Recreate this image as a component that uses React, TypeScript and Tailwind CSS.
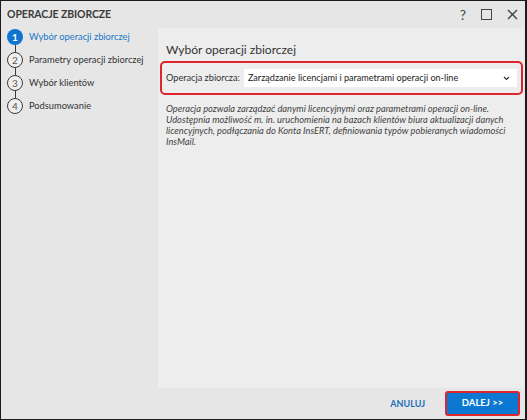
import React from 'react'

const steps = [
  'Wybór operacji zbiorczej',
  'Parametry operacji zbiorczej',
  'Wybór klientów',
  'Podsumowanie',
]

const App = () => {
  return (
    <div className="w-[527px] h-[420px] bg-[#e6e6e6] border-l border-t border-b border-r-2 border-[#1b1b1b] flex flex-col font-['Lato',sans-serif] text-[#333] whitespace-nowrap">
      {/* title bar */}
      <div className="h-[27px] flex items-center pl-[6px] pr-[6px]">
        <span className="text-[10.5px] font-bold text-[#3c3c3c] tracking-[-0.1px]">OPERACJE ZBIORCZE</span>
        <div className="ml-auto flex items-center gap-[15px] text-[#444]">
          <span className="text-[14px] leading-none">?</span>
          <span className="w-[11px] h-[11px] border-[1.5px] border-[#444]" />
          <svg width="11" height="11" viewBox="0 0 11 11" className="mr-[1px]">
            <path d="M1 1 L10 10 M10 1 L1 10" stroke="#444" strokeWidth="1.4" />
          </svg>
        </div>
      </div>

      <div className="flex flex-1 min-h-0">
        {/* steps */}
        <div className="w-[157px] pl-[6px] pt-[1px]">
          {steps.map((s, i) => (
            <div key={s} className="flex flex-col">
              <div className="flex items-center h-[16px]">
                {i === 0 ? (
                  <span className="w-[16px] h-[16px] rounded-full bg-[#0f74cf] text-white text-[10px] font-bold flex items-center justify-center">1</span>
                ) : (
                  <span className="w-[16px] h-[16px] rounded-full border-[1.5px] border-[#3a3a3a] bg-[#efefef] text-[#555] text-[10px] flex items-center justify-center">{i + 1}</span>
                )}
                <span className={`ml-[6px] text-[9.3px] ${i === 0 ? 'text-[#1a78c8]' : 'text-[#333]'}`}>{s}</span>
              </div>
              {i < steps.length - 1 && <div className="w-px h-[7px] bg-[#3a3a3a] ml-[7.5px]" />}
            </div>
          ))}
        </div>

        {/* content */}
        <div className="flex-1 bg-[#ededed] mr-[1px] pt-[14px] pl-[2px] pr-[1px]">
          <div className="pl-[6px] text-[12px] text-[#333] leading-[16px]">Wybór operacji zbiorczej</div>
          <div className="mt-[3px] h-[34px] border-2 border-[#e0242c] rounded-[5px] flex items-center pl-[4px] pr-[4px]">
            <span className="text-[9.2px] text-[#333] mr-[4px] shrink-0">Operacja zbiorcza:</span>
            <div className="flex-1 h-[18px] bg-white flex items-center pl-[4px] pr-[7px]">
              <span className="text-[9.1px] text-[#222]">Zarządzanie licencjami i parametrami operacji on-line</span>
              <svg width="7" height="5" viewBox="0 0 7 5" className="ml-auto">
                <path d="M1 1 L3.5 3.5 L6 1" stroke="#333" strokeWidth="1.2" fill="none" />
              </svg>
            </div>
          </div>
          <div className="mt-[8px] pl-[6px] text-[9.3px] leading-[11px] italic text-[#444]">
            <div>Operacja pozwala zarządzać danymi licencyjnymi oraz parametrami operacji on-line.</div>
            <div>Udostępnia możliwość m. in. uruchomienia na bazach klientów biura aktualizacji danych</div>
            <div>licencyjnych, podłączania do Konta InsERT, definiowania typów pobieranych wiadomości</div>
            <div>InsMail.</div>
          </div>
        </div>
      </div>

      {/* footer */}
      <div className="h-[31px] flex items-center justify-end pr-[5px]">
        <button className="text-[9px] font-bold text-[#1a6fb8] mr-[20px]">ANULUJ</button>
        <div className="border-2 border-[#e0242c] rounded-[3px]">
          <button className="w-[71px] h-[21px] bg-[#0c78d2] text-white text-[9.5px] font-bold flex items-center justify-center">DALEJ &gt;&gt;</button>
        </div>
      </div>
    </div>
  )
}

export default App
